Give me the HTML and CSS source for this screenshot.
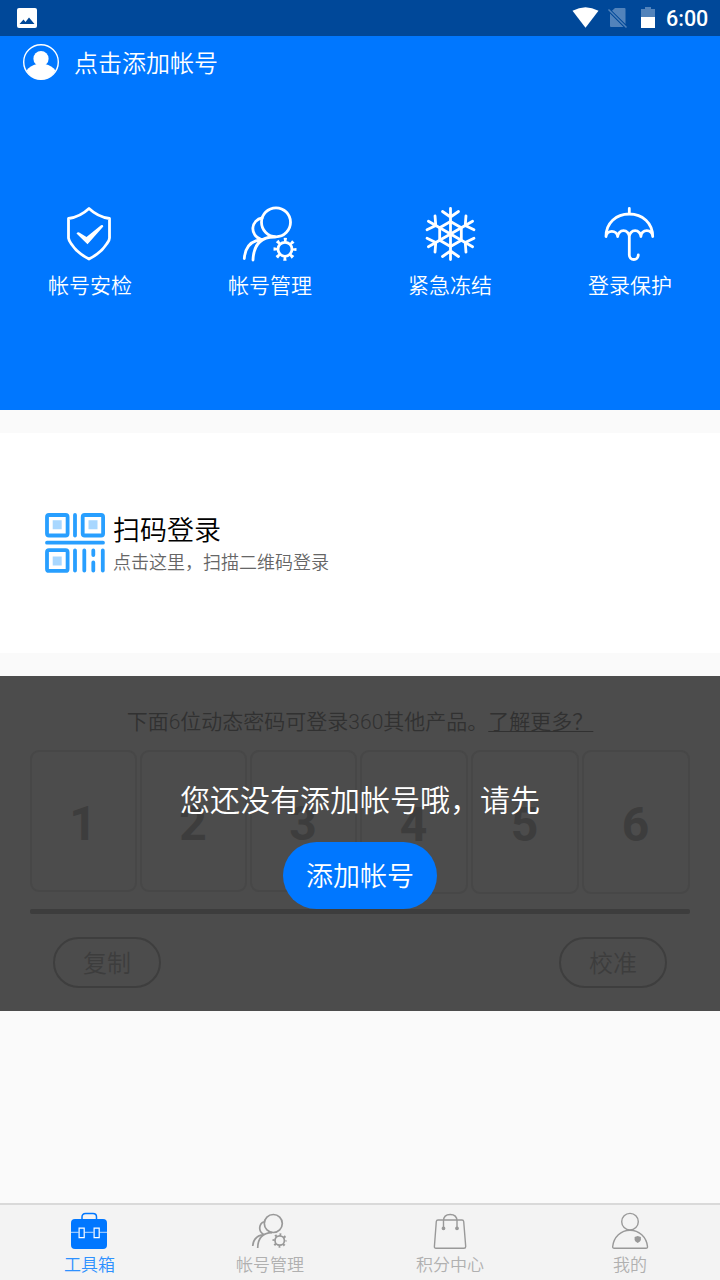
FILE: index.html
```html
<!DOCTYPE html>
<html lang="zh-CN">
<head>
<meta charset="utf-8">
<title>工具箱</title>
<link rel="stylesheet" href="styles.css">
</head>
<body>
<header class="status">
  <svg class="status-photo" viewBox="0 0 20 20"><rect width="20" height="20" rx="2" fill="#fff"/><path d="M2.5 16L6.5 11.5L8.5 14L12 9.5L17.5 16Z" fill="#004899"/></svg>
  <svg class="status-icons" viewBox="0 0 86 22">
    <path d="M0.500 3.800Q13.500-3.500 26.500 3.800L13.500 20.800Z" fill="#fff"/>
    <path d="M43 1H52.500Q53.500 1 53.500 2V17L40 3.800ZM38 6.500L51.500 20H39Q38 20 38 19Z" fill="#5283bb"/>
    <path d="M36.500 2.500L54.500 20.500" stroke="#5283bb" stroke-width="1.500"/>
    <path d="M69 2H73V0H79V2H83V10H69Z" fill="#5283bb"/><path d="M69 10H83V21H69Z" fill="#fff"/>
  </svg>
  <span class="clock">6:00</span>
</header>
<section class="hero">
  <div class="account">
    <svg class="avatar" viewBox="0 0 36 36"><circle cx="18" cy="18" r="17.300" fill="none" stroke="#fff" stroke-width="1.400"/><circle cx="18" cy="14.700" r="7.600" fill="#fff"/><path d="M3.500 26.500Q7 21.500 14 20H22Q29 21.500 32.500 26.500Q27.500 35.500 18 35.500T3.500 26.500Z" fill="#fff"/></svg>
    <span>点击添加帐号</span>
  </div>
  <div class="tools">
    <div class="tool">
      <svg viewBox="0 0 60 60"><path d="M29 4.500Q20 13 8.500 14.500V34Q9 37 11 39.500Q17 49 29 55Q41 49 47 39.500Q49.500 36.500 49.500 34V14.500Q38 13 29 4.500Z"/><path class="solid" d="M16.500 29.500Q18 27.500 20 29L26.500 33L41 21.300Q43 20.500 43.300 22.500L27.500 40.300Z"/></svg>
      <span>帐号安检</span>
    </div>
    <div class="tool">
      <svg viewBox="0 0 60 60"><circle cx="36" cy="18.300" r="14.500"/><path d="M22 14A10.800 10.800 0 0 0 20.500 35M4.300 54.500Q5.500 37 22 35.500M13 56Q14 32.500 35 33"/><circle cx="45" cy="45.300" r="7"/><path stroke-dasharray="2.900 4.561" stroke-dashoffset="1.450" stroke-width="4" d="M54.500 45.300A9.500 9.500 0 1 1 35.500 45.300A9.500 9.500 0 1 1 54.500 45.300"/></svg>
      <span>帐号管理</span>
    </div>
    <div class="tool">
      <svg viewBox="0 0 60 60"><g transform="translate(30.500 30)"><path d="M0 0V-25.500M-8-22.500L0-17L8-22.500M0-12.500L10.800-6.250"/><path transform="rotate(60)" d="M0 0V-25.500M-8-22.500L0-17L8-22.500M0-12.500L10.800-6.250"/><path transform="rotate(120)" d="M0 0V-25.500M-8-22.500L0-17L8-22.500M0-12.500L10.800-6.250"/><path transform="rotate(180)" d="M0 0V-25.500M-8-22.500L0-17L8-22.500M0-12.500L10.800-6.250"/><path transform="rotate(240)" d="M0 0V-25.500M-8-22.500L0-17L8-22.500M0-12.500L10.800-6.250"/><path transform="rotate(300)" d="M0 0V-25.500M-8-22.500L0-17L8-22.500M0-12.500L10.800-6.250"/></g></svg>
      <span>紧急冻结</span>
    </div>
    <div class="tool">
      <svg viewBox="0 0 60 60"><path d="M29.300 4.500V10M6 32.500C6 19 16 10 29.300 10S52.700 19 52.700 32.500A5.900 5.900 0 0 0 40.900 32.500A5.800 5.800 0 0 0 29.300 32.500A5.800 5.800 0 0 0 17.700 32.500A5.900 5.900 0 0 0 6 32.500M29.300 31V51A4.500 4.500 0 0 0 38.300 51"/></svg>
      <span>登录保护</span>
    </div>
  </div>
</section>
<section class="scan">
  <svg class="qr" viewBox="0 0 60 60"><g fill="none" stroke="#289fff" stroke-width="3.800" stroke-linecap="round"><rect x="2" y="2" width="20.600" height="20.500" rx="2"/><rect x="37.700" y="2" width="20.400" height="20.500" rx="2"/><rect x="2" y="37.200" width="20.600" height="20.700" rx="2"/><path d="M30 2V22.500M2 29.700H58M30 37.500V57.500M39.300 37.500V57.500M48.300 37.500V42M48.300 49.500V57.500M57.800 37.500V57.500"/></g><path d="M7.700 7.200H16.700V16.200H7.700ZM43.500 7.200H52.500V16.200H43.500ZM7.700 43.500H16.700V52.500H7.700Z" fill="#a8d7ff"/></svg>
  <div class="scan-text"><h2>扫码登录</h2><p>点击这里，扫描二维码登录</p></div>
</section>
<section class="otp">
  <p class="otp-info">下面6位动态密码可登录360其他产品。<a>了解更多？</a></p>
  <div class="digits">
    <span>1</span><span>2</span><span>3</span><span class="tall">4</span><span class="tall">5</span><span class="tall">6</span>
  </div>
  <div class="progress"></div>
  <div class="actions"><span>复制</span><span>校准</span></div>
  <div class="notice">
    <p>您还没有添加帐号哦，请先</p>
    <button>添加帐号</button>
  </div>
</section>
<nav class="tabs">
  <div class="tab active">
    <svg viewBox="0 0 40 38"><path d="M12 7V5Q12 1.600 15.500 1.600H23Q26.500 1.600 26.500 5V7" stroke="#07f" stroke-width="1.500"/><rect x="1" y="7" width="36" height="30" rx="4" fill="#07f" stroke="none"/><path d="M1 20.300H8.700M14.500 20.300H23.500M29.500 20.300H37" stroke="#b8d9ff" stroke-width="1"/><path d="M9.100 16.100H14.200V25.600H9.100ZM24.100 16.100H29.200V25.600H24.100Z" stroke="#fff" stroke-width="1.200"/></svg>
    <span>工具箱</span>
  </div>
  <div class="tab">
    <svg viewBox="0 0 40 38"><g stroke-width="1.700"><circle cx="23.300" cy="11.500" r="9"/><path d="M14 9.700A6.800 6.800 0 0 0 13.300 22M2.700 34Q3.500 23.500 14.500 22.300M7.700 36Q8 21 22 20.700"/><circle cx="29.700" cy="28.500" r="4.700"/></g><path stroke-dasharray="1.800 2.912" stroke-dashoffset=".9" stroke-width="2.400" d="M35.700 28.500A6 6 0 1 1 23.700 28.500A6 6 0 1 1 35.700 28.500"/></svg>
    <span>帐号管理</span>
  </div>
  <div class="tab">
    <svg viewBox="0 0 40 38"><path d="M8 8H32Q33.500 8 33.700 9.500L35.700 34.500Q35.700 36.300 34 36.300H6Q4.300 36.300 4.400 34.500L6.300 9.500Q6.500 8 8 8ZM13.500 16V9Q13.500 2.500 20.200 2.500T27 9V16"/><circle cx="13.500" cy="16.300" r="1.200" fill="#999"/><circle cx="27" cy="16.300" r="1.200" fill="#999"/></svg>
    <span>积分中心</span>
  </div>
  <div class="tab">
    <svg viewBox="0 0 40 38"><circle cx="20" cy="9.700" r="8.300"/><path d="M20 18.200C29 18.200 36.500 25 37.500 34.500Q37.700 36.300 36 36.300H4.300Q2.500 36.300 2.700 34.500C3.700 25 11 18.200 20 18.200Z"/><path d="M27.700 24L30.900 25V28Q30.500 29.700 27.700 31Q24.900 29.700 24.600 28V25Z" fill="#999" stroke="none"/></svg>
    <span>我的</span>
  </div>
</nav>
</body>
</html>
```

FILE: styles.css
```css
* { box-sizing: border-box; }
body {
  margin: 0;
  width: 720px;
  height: 1280px;
  overflow: hidden;
  display: flex;
  flex-direction: column;
  background: #fafafa;
  font-family: Roboto, "Noto Sans CJK SC DemiLight", "Noto Sans CJK SC", sans-serif;
  font-weight: 350;
}
p, h2 { margin: 0; font-weight: inherit; }
svg { display: block; flex: none; }
.status {
  height: 36px;
  flex: none;
  display: flex;
  align-items: center;
  padding: 0 12px 0 17px;
  background: #004899;
}
.status-photo { width: 20px; height: 20px; }
.status-icons { width: 86px; height: 22px; margin-left: auto; margin-top: -1px; }
.clock {
  width: 42px;
  margin-left: 8px;
  color: #fff;
  font-size: 21.5px;
  font-weight: 500;
  line-height: 36px;
  padding-top: 2px;
}
.hero { height: 374px; flex: none; background: #07f; color: #fff; }
.account {
  display: flex;
  align-items: center;
  gap: 15px;
  height: 52px;
  padding-left: 23px;
  font-size: 24px;
}
.account span { padding-bottom: 2px; }
.avatar { width: 36px; height: 36px; }
.tools { display: grid; grid-template-columns: repeat(4, 1fr); margin-top: 116px; }
.tool { display: flex; flex-direction: column; align-items: center; font-size: 21px; line-height: 44px; }
.tool svg {
  width: 60px;
  height: 60px;
  fill: none;
  stroke: #fff;
  stroke-width: 2.8;
  stroke-linejoin: round;
  stroke-linecap: round;
}
.tool [stroke-dasharray], .tab [stroke-dasharray] { stroke-linecap: butt; }
.tool .solid { fill: #fff; stroke: none; }
.scan {
  height: 220px;
  flex: none;
  margin-top: 23px;
  padding-left: 45px;
  display: flex;
  align-items: center;
  gap: 8px;
  background: #fff;
}
.qr { width: 60px; height: 60px; }
.scan-text { padding-top: 3px; }
.scan-text h2 { font-size: 27px; line-height: 36px; color: #000; }
.scan-text p { font-size: 18px; line-height: 27px; color: #666; }
.otp {
  position: relative;
  height: 335px;
  flex: none;
  margin-top: 23px;
  padding: 30px 30px 0;
  background: #4c4c4c;
  color: #3d3d3d;
}
.otp-info { height: 44px; font-size: 21px; line-height: 33px; text-align: center; color: #313131; }
.otp-info a { text-decoration: underline; text-decoration-thickness: 1px; text-underline-offset: 2px; }
.digits { display: grid; grid-template-columns: 107px 107px 107px 108px 108px 108px; gap: 3px; height: 159px; align-items: start; }
.digits span {
  height: 142px;
  padding-right: 1px;
  border: 2px solid #474747;
  border-radius: 9px;
  text-align: center;
  font-size: 48px;
  font-weight: 700;
  line-height: 143px;
}
.digits .tall { height: 144px; line-height: 145px; }
.progress { height: 5px; border-radius: 2px; background: #3d3d3d; }
.actions { display: flex; justify-content: space-between; padding: 23px 23px 0; }
.actions span {
  width: 108px;
  height: 51px;
  border: 2px solid #3e3e3e;
  border-radius: 26px;
  font-size: 24px;
  line-height: 50px;
  text-align: center;
}
.notice {
  position: absolute;
  inset: 0;
  display: flex;
  flex-direction: column;
  align-items: center;
  padding-top: 103px;
  color: #fff;
}
.notice p { font-size: 30px; line-height: 44px; }
.notice button {
  width: 154px;
  height: 67px;
  margin-top: 19px;
  padding: 0 0 2px;
  border: 0;
  border-radius: 34px;
  background: #07f;
  color: #fff;
  font-family: inherit;
  font-size: 27px;
  font-weight: inherit;
}
.tabs {
  height: 77px;
  flex: none;
  margin-top: auto;
  padding-top: 7px;
  display: grid;
  grid-template-columns: repeat(4, 1fr);
  border-top: 2px solid #d9d9d9;
  background: #f3f3f3;
}
.tab { display: flex; flex-direction: column; align-items: center; font-size: 17px; line-height: 31px; color: #b0b0b0; }
.tab svg { width: 40px; height: 38px; fill: none; stroke: #999; stroke-width: 1.4; }
.active { color: #2d91ff; }
.active span { margin-right: 1px; }
```
